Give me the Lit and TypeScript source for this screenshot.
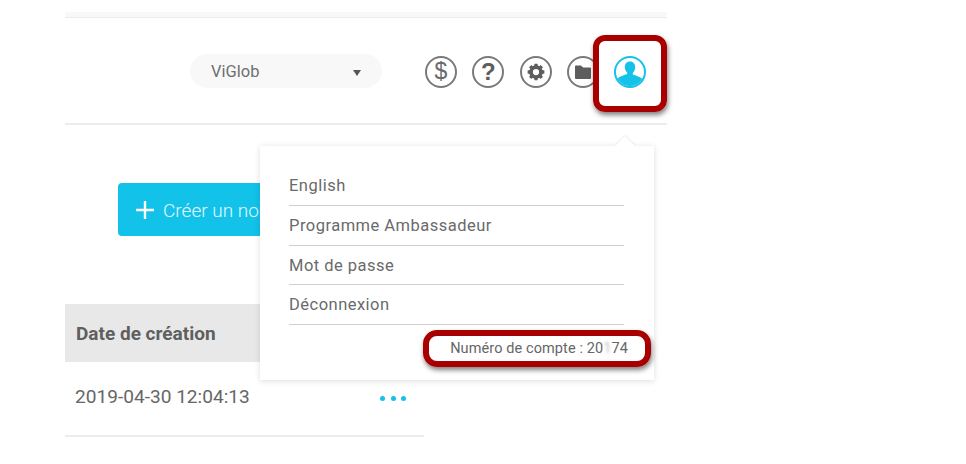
import { LitElement, html, css } from 'lit';
import { customElement } from 'lit/decorators.js';

const menuItems = ['English', 'Programme Ambassadeur', 'Mot de passe', 'Déconnexion'];

@customElement('app-root')
export class AppRoot extends LitElement {
  static styles = css`
    :host {
      display: block;
      width: 966px;
      height: 464px;
      background: #fff;
      font-family: Roboto, "Liberation Sans", sans-serif;
      color: #666;
      overflow: hidden;
    }
    .page {
      position: relative;
      width: 602px;
      height: 464px;
      margin-left: 65px;
    }
    .strip {
      height: 18px;
      box-sizing: border-box;
      padding-top: 12px;
      background: #f8f8f8;
      background-clip: content-box;
      border-bottom: 1px solid #ececec;
    }
    .header {
      height: 107px;
      display: flex;
      align-items: center;
      border-bottom: 2px solid #ececec;
      box-sizing: border-box;
      padding: 0 21px 0 125px;
    }
    .select {
      width: 192px;
      height: 34px;
      margin-top: 1px;
      border-radius: 18px;
      background: #f8f8f8;
      display: flex;
      align-items: center;
      justify-content: space-between;
      padding: 0 21px;
      box-sizing: border-box;
      font-size: 16.5px;
      color: #6f6f6f;
      margin-right: 43px;
    }
    .caret {
      width: 0;
      height: 0;
      border-left: 4px solid transparent;
      border-right: 4px solid transparent;
      border-top: 6px solid #555;
      margin-top: 3px;
    }
    .icons {
      display: flex;
      gap: 15.25px;
      margin-top: 2px;
    }
    .icon {
      width: 32px;
      height: 32px;
      border-radius: 50%;
      border: 2px solid #7a7a7a;
      box-sizing: border-box;
      display: flex;
      align-items: center;
      justify-content: center;
      color: #5d5d5d;
      background: #fff;
      overflow: hidden;
    }
    .icon svg {
      display: block;
      flex: none;
    }
    .dollar {
      font-size: 23px;
      font-family: "Liberation Sans", sans-serif;
      color: #6a6a6a;
    }
    .help {
      font-size: 24px;
      font-weight: 700;
      font-family: "Liberation Sans", sans-serif;
    }
    .icon.user {
      border-color: #12c2e9;
      color: #12c2e9;
    }
    .content {
      padding: 58px 0 0 53px;
    }
    .create {
      width: 260px;
      height: 53px;
      border-radius: 4px;
      background: #12c2e9;
      color: #e4f8fd;
      display: flex;
      align-items: center;
      gap: 8px;
      padding-left: 17px;
      box-sizing: border-box;
      font-size: 19px;
      font-weight: 300;
    }
    .create span {
      margin-top: 1px;
    }
    .table-wrap {
      margin-left: -53px;
    }
    .table {
      margin-top: 68px;
      width: 359px;
    }
    .thead {
      height: 58px;
      background: #e8e8e8;
      display: flex;
      align-items: center;
      padding-left: 11px;
      font-weight: 700;
      font-size: 19px;
      color: #5f5f5f;
    }
    .row {
      height: 75px;
      display: flex;
      align-items: center;
      justify-content: space-between;
      padding: 0 18px 5px 10px;
      box-sizing: border-box;
      border-bottom: 2px solid #ececec;
      font-size: 19.1px;
      color: #666;
    }
    .dots {
      display: flex;
      gap: 5.5px;
      margin-top: 5px;
    }
    .dots i {
      width: 5px;
      height: 5px;
      border-radius: 50%;
      background: #12c2e9;
    }
    .menu {
      position: absolute;
      left: 195px;
      top: 146px;
      width: 394px;
      height: 234px;
      box-sizing: border-box;
      background: #fff;
      box-shadow: 0 1px 6px rgba(0, 0, 0, 0.14);
      padding: 20px 30px 0 29px;
      font-size: 16.5px;
      letter-spacing: 0.48px;
      color: #6a6a6a;
    }
    .menu::before {
      content: '';
      position: absolute;
      right: 22px;
      top: -7px;
      width: 14px;
      height: 14px;
      background: #fff;
      transform: rotate(45deg);
      box-shadow: -1px -1px 2px rgba(0, 0, 0, 0.07);
    }
    .item {
      height: 39.8px;
      line-height: 39px;
      border-bottom: 1px solid #cfcfcf;
      box-sizing: border-box;
    }
    .account {
      font-size: 14.5px;
      letter-spacing: 0.1px;
      text-align: right;
      margin-top: 15px;
      margin-right: -4px;
      color: #666;
    }
    .blur {
      filter: blur(1.5px);
      opacity: 0.45;
    }
    .callout {
      position: absolute;
      box-sizing: border-box;
      border: 6px solid #a80000;
      border-radius: 12px;
      box-shadow: 1px 3px 5px rgba(0, 0, 0, 0.5);
    }
    .callout.top {
      left: 528px;
      top: 35px;
      width: 74px;
      height: 77px;
    }
    .callout.bottom {
      left: 358px;
      top: 330px;
      width: 228px;
      height: 37px;
      border-radius: 14px;
    }
  `;

  render() {
    return html`
      <div class="page">
        <div class="strip"></div>
        <div class="header">
          <div class="select"><span>ViGlob</span><span class="caret"></span></div>
          <div class="icons">
            <span class="icon dollar">$</span>
            <span class="icon help">?</span>
            <span class="icon">
              <svg width="20" height="20" viewBox="0 0 24 24" fill="none" stroke="currentColor">
                <circle cx="12" cy="12" r="6" stroke-width="4.5" />
                <path stroke-width="4" d="M12 2v4M12 18v4M2 12h4M18 12h4M5 5l3 3M16 16l3 3M5 19l3-3M16 8l3-3" />
              </svg>
            </span>
            <span class="icon">
              <svg width="20" height="20" viewBox="0 0 20 20" fill="currentColor">
                <path d="M2 4.5a1 1 0 0 1 1-1h5l2 2h7a1 1 0 0 1 1 1V16a1 1 0 0 1-1 1H3a1 1 0 0 1-1-1z" />
              </svg>
            </span>
            <span class="icon user">
              <svg width="28" height="28" viewBox="0 0 28 28" fill="currentColor">
                <path d="M14 3.5c3.2 0 5.2 2.4 5.2 5.6 0 2.5-1 4.7-2.4 5.9v1.6c2.8 1.1 7 2.1 9.2 3.8V28H2v-8.1c2.2-1.7 6.4-2.7 9.2-3.8v-1.6C9.8 13.3 8.8 11.600 8.800 9.100c0-3.200 2-5.600 5.200-5.600z" />
              </svg>
            </span>
          </div>
        </div>
        <div class="content">
          <div class="create">
            <svg width="20" height="20" viewBox="0 0 20 20" stroke="#fff" stroke-width="2.4">
              <path d="M10 1v18M1 10h18" />
            </svg>
            <span>Créer un nouveau</span>
          </div>
          <div class="table-wrap">
            <div class="table">
              <div class="thead">Date de création</div>
              <div class="row">
                <span>2019-04-30 12:04:13</span>
                <span class="dots"><i></i><i></i><i></i></span>
              </div>
            </div>
          </div>
        </div>
        <div class="menu">
          ${menuItems.map((label) => html`<div class="item">${label}</div>`)}
          <div class="account">Numéro de compte : 20<span class="blur">1</span>74</div>
        </div>
        <div class="callout top"></div>
        <div class="callout bottom"></div>
      </div>
    `;
  }
}
